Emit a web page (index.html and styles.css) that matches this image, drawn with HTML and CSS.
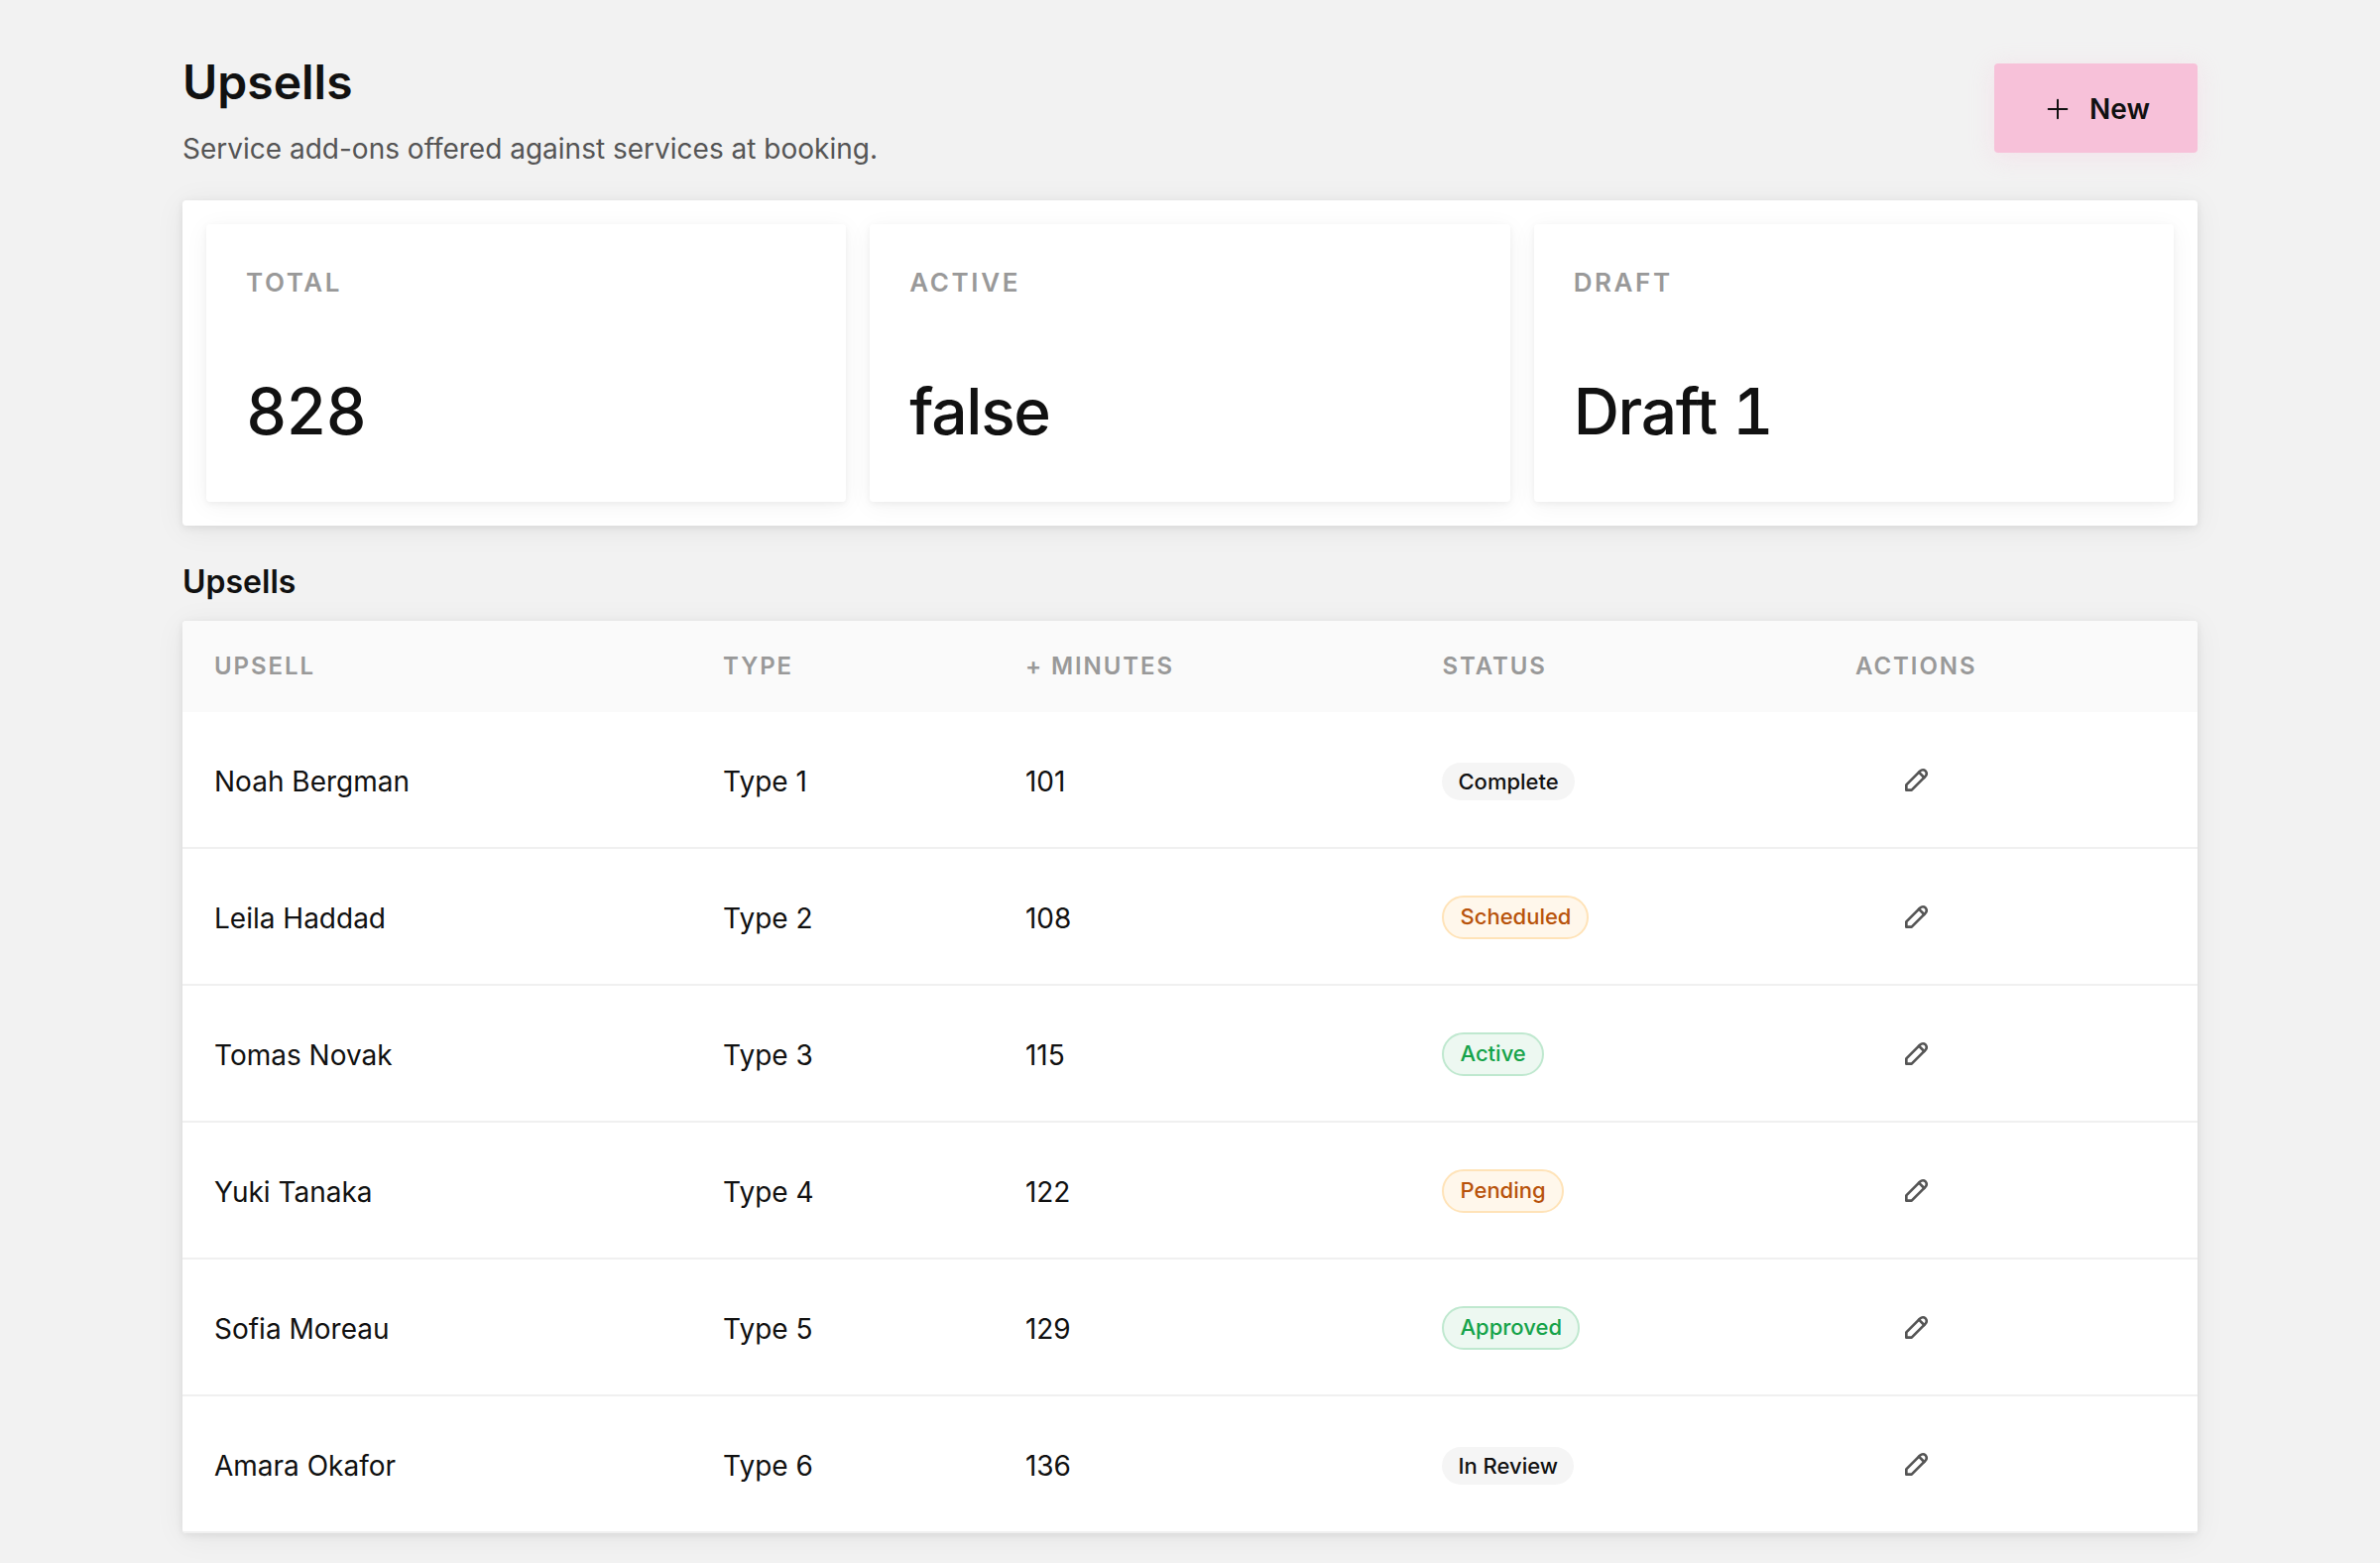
FILE: index.html
```html
<!DOCTYPE html>
<html lang="en">
<head>
    <meta charset="UTF-8">
    <meta name="viewport" content="width=device-width, initial-scale=1.0">
    <title>Upsells</title>
    <link rel="stylesheet" href="styles.css">
</head>
<body>
    <!-- shared icons -->
    <svg class="sprite" aria-hidden="true">
        <symbol id="icon-plus" viewBox="0 0 24 24">
            <path d="M12 5v14M5 12h14"/>
        </symbol>
        <symbol id="icon-pencil" viewBox="0 0 24 24">
            <path d="M4 20h4L18.500 9.500a2.828 2.828 0 1 0-4-4L4 16v4"/>
            <path d="M13.500 6.500l4 4"/>
        </symbol>
    </svg>
    <main class="page">
        <header class="top">
            <div class="heading">
                <h1 class="title">Upsells</h1>
                <p class="subtitle">Service add-ons offered against services at booking.</p>
            </div>
            <button type="button" class="new-btn">
                <svg class="icon-plus" aria-hidden="true"><use href="#icon-plus"/></svg>
                New
            </button>
        </header>

        <section class="stats">
            <div class="stat">
                <h2 class="stat-label">Total</h2>
                <p class="stat-value">828</p>
            </div>
            <div class="stat">
                <h2 class="stat-label">Active</h2>
                <p class="stat-value">false</p>
            </div>
            <div class="stat">
                <h2 class="stat-label">Draft</h2>
                <p class="stat-value">Draft 1</p>
            </div>
        </section>

        <h2 class="section-title" id="upsells">Upsells</h2>
        <div class="card">
            <table class="table" aria-labelledby="upsells">
                <colgroup>
                    <col class="col-name">
                    <col class="col-type">
                    <col class="col-minutes">
                    <col class="col-status">
                    <col class="col-actions">
                </colgroup>
                <thead>
                    <tr>
                        <th>Upsell</th>
                        <th>Type</th>
                        <th>+ Minutes</th>
                        <th>Status</th>
                        <th>Actions</th>
                    </tr>
                </thead>
                <tbody>
                    <tr>
                        <td>Noah Bergman</td>
                        <td>Type 1</td>
                        <td>101</td>
                        <td class="status"><span class="pill">Complete</span></td>
                        <td class="actions"><button type="button" class="edit-btn" aria-label="Edit"><svg class="icon-pencil" aria-hidden="true"><use href="#icon-pencil"/></svg></button></td>
                    </tr>
                    <tr>
                        <td>Leila Haddad</td>
                        <td>Type 2</td>
                        <td>108</td>
                        <td class="status"><span class="pill pill-warning">Scheduled</span></td>
                        <td class="actions"><button type="button" class="edit-btn" aria-label="Edit"><svg class="icon-pencil" aria-hidden="true"><use href="#icon-pencil"/></svg></button></td>
                    </tr>
                    <tr>
                        <td>Tomas Novak</td>
                        <td>Type 3</td>
                        <td>115</td>
                        <td class="status"><span class="pill pill-success">Active</span></td>
                        <td class="actions"><button type="button" class="edit-btn" aria-label="Edit"><svg class="icon-pencil" aria-hidden="true"><use href="#icon-pencil"/></svg></button></td>
                    </tr>
                    <tr>
                        <td>Yuki Tanaka</td>
                        <td>Type 4</td>
                        <td>122</td>
                        <td class="status"><span class="pill pill-warning">Pending</span></td>
                        <td class="actions"><button type="button" class="edit-btn" aria-label="Edit"><svg class="icon-pencil" aria-hidden="true"><use href="#icon-pencil"/></svg></button></td>
                    </tr>
                    <tr>
                        <td>Sofia Moreau</td>
                        <td>Type 5</td>
                        <td>129</td>
                        <td class="status"><span class="pill pill-success">Approved</span></td>
                        <td class="actions"><button type="button" class="edit-btn" aria-label="Edit"><svg class="icon-pencil" aria-hidden="true"><use href="#icon-pencil"/></svg></button></td>
                    </tr>
                    <tr>
                        <td>Amara Okafor</td>
                        <td>Type 6</td>
                        <td>136</td>
                        <td class="status"><span class="pill">In Review</span></td>
                        <td class="actions"><button type="button" class="edit-btn" aria-label="Edit"><svg class="icon-pencil" aria-hidden="true"><use href="#icon-pencil"/></svg></button></td>
                    </tr>
                </tbody>
            </table>
        </div>
    </main>
</body>
</html>
```

FILE: styles.css
```css
*{
    margin: 0;
    padding: 0;
    box-sizing: border-box;
}
body{
    background-color: #f2f2f2;
    color: #111;
    font-family: Inter, "Liberation Sans", sans-serif;
    font-size: 28px;
    line-height: 42px;
}
.sprite{
    display: none;
}
.page{
    max-width: 2080px;
    margin: 0 auto;
    padding: 52px 24px 30px;
}

/* header */
.top{
    display: flex;
    justify-content: space-between;
    align-items: flex-start;
    margin-bottom: 31px;
}
.title{
    font-size: 48px;
    font-weight: 600;
    line-height: 62px;
}
.subtitle{
    margin-top: 15px;
    color: #555;
}
.new-btn{
    display: flex;
    align-items: center;
    gap: 16px;
    height: 90px;
    margin-top: 12px;
    padding: 2px 48px 0;
    border: none;
    border-radius: 4px;
    background-color: #f7c1d9;
    color: #111;
    font: inherit;
    font-weight: 600;
    box-shadow: 0 4px 24px rgba(247, 193, 217, 0.3);
    cursor: pointer;
}
.icon-plus{
    width: 32px;
    height: 32px;
    fill: none;
    stroke: currentColor;
    stroke-width: 1.5;
    stroke-linecap: round;
}

/* stats */
.stats{
    display: grid;
    grid-template-columns: repeat(3, 1fr);
    gap: 24px;
    padding: 24px;
    border-radius: 4px;
    background-color: #fff;
    box-shadow: 0 4px 32px rgba(0, 0, 0, 0.06), 0 2px 8px rgba(0, 0, 0, 0.08);
}
.stat{
    padding: 40px;
    border-radius: 4px;
    background-color: #fff;
    box-shadow: 0 4px 24px rgba(0, 0, 0, 0.05), 0 2px 6px rgba(0, 0, 0, 0.05);
}
.stat-label{
    color: #999;
    font-size: 26px;
    font-weight: 600;
    line-height: 38px;
    letter-spacing: 0.1em;
    text-transform: uppercase;
}
.stat-value{
    margin-top: 72px;
    margin-bottom: 12px;
    font-size: 64px;
    font-weight: 500;
    font-variant-numeric: tabular-nums;
    line-height: 78px;
    letter-spacing: -0.02em;
}

/* table */
.section-title{
    margin: 36px 0 18px;
    font-size: 32px;
    font-weight: 600;
    line-height: 42px;
}
.card{
    overflow: hidden;
    border-radius: 4px;
    background-color: #fff;
    box-shadow: 0 4px 32px rgba(0, 0, 0, 0.06), 0 2px 8px rgba(0, 0, 0, 0.08);
}
.table{
    width: 100%;
    border-collapse: separate;
    border-spacing: 0;
    table-layout: fixed;
}
.col-name{
    width: 25.25%;
}
.col-type{
    width: 15%;
}
.col-minutes{
    width: 20.7%;
}
.col-status{
    width: 20.5%;
}
.table th{
    height: 92px;
    padding: 0 32px;
    background-color: #fafafa;
    color: #999;
    font-size: 24px;
    font-weight: 600;
    letter-spacing: 0.08em;
    text-align: left;
    text-transform: uppercase;
}
.table td{
    height: 138px;
    padding: 4px 32px 0;
    border-bottom: 2px solid #f0f0f0;
}
.table .status,
.table .actions{
    padding-top: 0;
}
.pill{
    display: inline-block;
    padding: 4px 16px;
    border-radius: 22px;
    background-color: #f5f5f5;
    font-size: 22px;
    font-weight: 500;
    line-height: 30px;
    vertical-align: middle;
}
.pill-warning{
    padding: 4px 16px 6px;
    border: 2px solid #ffe3b8;
    background-color: #fff7eb;
    color: #b8530b;
}
.pill-success{
    padding: 4px 16px 6px;
    border: 2px solid #bfe8cf;
    background-color: #edf8f1;
    color: #16a34a;
}
.edit-btn{
    display: flex;
    align-items: center;
    height: 56px;
    padding: 0 46px;
    border: none;
    background: none;
    color: #555;
    cursor: pointer;
}
.icon-pencil{
    width: 32px;
    height: 32px;
    fill: none;
    stroke: currentColor;
    stroke-width: 2;
    stroke-linecap: round;
    stroke-linejoin: round;
}
```
